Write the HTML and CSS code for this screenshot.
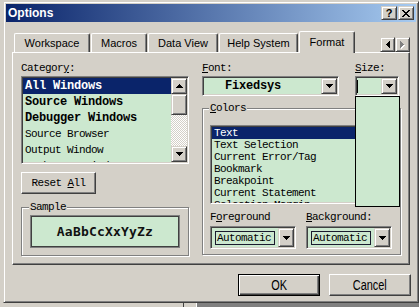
FILE: index.html
```html
<!DOCTYPE html>
<html lang="en">
<head>
  <meta charset="UTF-8">
  <meta name="viewport" content="width=device-width, initial-scale=1.0">
  <title>Options</title>
  <link rel="stylesheet" href="styles.css">
</head>
<body>
  <div class="dialog raised">
    <div class="titlebar">
      <span class="title">Options</span>
      <div class="title-buttons">
        <div class="title-btn raised help">?</div>
        <div class="title-btn raised">
          <svg width="8" height="7" shape-rendering="crispEdges"><path d="M0 0h2v1H0zM6 0h2v1H6zM1 1h2v1H1zM5 1h2v1H5zM2 2h4v1H2zM3 3h2v1H3zM2 4h4v1H2zM1 5h2v1H1zM5 5h2v1H5zM0 6h2v1H0zM6 6h2v1H6z"/></svg>
        </div>
      </div>
    </div>

    <div class="tabs">
      <div class="tab tab-workspace">Workspace</div>
      <div class="tab tab-macros">Macros</div>
      <div class="tab tab-dataview">Data View</div>
      <div class="tab tab-help">Help System</div>
      <div class="tab tab-format active">Format</div>
      <div class="tab-scroll">
        <div class="scroll-btn raised">
          <svg width="4" height="7" shape-rendering="crispEdges"><path d="M3 0h1v7H3zM2 1h1v5H2zM1 2h1v3H1zM0 3h1v1H0z"/></svg>
        </div>
        <div class="scroll-btn raised">
          <svg width="5" height="8" shape-rendering="crispEdges">
            <path fill="#fff" d="M1 1h1v7H1zM2 2h1v5H2zM3 3h1v3H3zM4 4h1v1H4z"/>
            <path fill="#808080" d="M0 0h1v7H0zM1 1h1v5H1zM2 2h1v3H2zM3 3h1v1H3z"/>
          </svg>
        </div>
      </div>
    </div>

    <div class="panel">
      <div class="col-left">
        <div class="label">Categor<u>y</u>:</div>
        <div class="listbox sunken category-list">
          <div class="rows">
            <div class="row bold selected">All Windows</div>
            <div class="row bold">Source Windows</div>
            <div class="row bold">Debugger Windows</div>
            <div class="row">Source Browser</div>
            <div class="row">Output Window</div>
            <div class="row">Workspace Window</div>
          </div>
          <div class="vscroll">
            <div class="sb-btn raised">
              <svg width="7" height="4" shape-rendering="crispEdges"><path d="M3 0h1v1H3zM2 1h3v1H2zM1 2h5v1H1zM0 3h7v1H0z"/></svg>
            </div>
            <div class="sb-thumb raised"></div>
            <div class="sb-track"></div>
            <div class="sb-btn raised">
              <svg width="7" height="4" shape-rendering="crispEdges"><path d="M0 0h7v1H0zM1 1h5v1H1zM2 2h3v1H2zM3 3h1v1H3z"/></svg>
            </div>
          </div>
        </div>
        <div class="push reset"><span>Reset <u>A</u>ll</span></div>
        <fieldset class="group sample-group">
          <legend>Sample</legend>
          <div class="sample">AaBbCcXxYyZz</div>
        </fieldset>
      </div>

      <div class="col-right">
        <div class="font-row">
          <div class="font-col">
            <div class="label"><u>F</u>ont:</div>
            <div class="combo sunken">
              <div class="combo-field"><span class="font-name">Fixedsys</span></div>
              <div class="drop-btn raised">
                <svg width="7" height="4" shape-rendering="crispEdges"><path d="M0 0h7v1H0zM1 1h5v1H1zM2 2h3v1H2zM3 3h1v1H3z"/></svg>
              </div>
            </div>
          </div>
          <div class="size-col">
            <div class="label"><u>S</u>ize:</div>
            <div class="combo sunken">
              <div class="combo-field"><span class="caret"></span></div>
              <div class="drop-btn raised">
                <svg width="7" height="4" shape-rendering="crispEdges"><path d="M0 0h7v1H0zM1 1h5v1H1zM2 2h3v1H2zM3 3h1v1H3z"/></svg>
              </div>
            </div>
            <div class="size-list"></div>
          </div>
        </div>

        <fieldset class="group colors-group">
          <legend><u>C</u>olors</legend>
          <div class="listbox sunken colors-list">
            <div class="row selected">Text</div>
            <div class="row">Text Selection</div>
            <div class="row">Current Error/Tag</div>
            <div class="row">Bookmark</div>
            <div class="row">Breakpoint</div>
            <div class="row">Current Statement</div>
            <div class="row">Selection Margin</div>
          </div>
          <div class="pickers">
            <div class="picker">
              <div class="label">F<u>o</u>reground</div>
              <div class="combo sunken color-combo">
                <div class="combo-field"><span class="color-value">Automatic</span></div>
                <div class="drop-btn raised">
                  <svg width="7" height="4" shape-rendering="crispEdges"><path d="M0 0h7v1H0zM1 1h5v1H1zM2 2h3v1H2zM3 3h1v1H3z"/></svg>
                </div>
              </div>
            </div>
            <div class="picker">
              <div class="label"><u>B</u>ackground:</div>
              <div class="combo sunken color-combo">
                <div class="combo-field"><span class="color-value">Automatic</span></div>
                <div class="drop-btn raised">
                  <svg width="7" height="4" shape-rendering="crispEdges"><path d="M0 0h7v1H0zM1 1h5v1H1zM2 2h3v1H2zM3 3h1v1H3z"/></svg>
                </div>
              </div>
            </div>
          </div>
        </fieldset>
      </div>
    </div>

    <div class="actions">
      <div class="push default"><span class="push-text">OK</span></div>
      <div class="push"><span class="push-text">Cancel</span></div>
    </div>
  </div>
  <div class="backdrop-strip"></div>
</body>
</html>
```

FILE: styles.css
```css
* {
  box-sizing: border-box;
}
body {
  margin: 0;
  width: 419px;
  height: 307px;
  overflow: hidden;
  background: #d4d0c8;
  font-family: "Liberation Mono", "DejaVu Sans Mono", monospace;
  font-size: 11px;
  letter-spacing: -0.6px;
  color: #000;
}

/* win2k bevels */
.raised {
  border: 1px solid;
  border-color: #d4d0c8 #404040 #404040 #d4d0c8;
  box-shadow: inset 1px 1px #fff, inset -1px -1px #808080;
  background: #d4d0c8;
}
.sunken {
  border: 1px solid;
  border-color: #808080 #fff #fff #808080;
  box-shadow: inset 1px 1px #404040, inset -1px -1px #d4d0c8;
}

.dialog {
  width: 416px;
  height: 302px;
  margin: 1px 0 0 3px;
  padding: 2px;
  display: flex;
  flex-direction: column;
}

.titlebar {
  flex: none;
  height: 18px;
  padding: 0 2px;
  display: flex;
  align-items: center;
  justify-content: space-between;
  background: linear-gradient(to right, #0a246a, #a6caf0);
}
.title {
  font-family: "Liberation Sans", Arial, sans-serif;
  font-size: 12px;
  font-weight: bold;
  letter-spacing: 0;
  color: #fff;
}
.title-buttons {
  display: flex;
  gap: 1px;
}
.title-btn {
  width: 16px;
  height: 14px;
  display: flex;
  align-items: center;
  justify-content: center;
}
.title-btn.help {
  font-family: "Liberation Sans", Arial, sans-serif;
  font-size: 11px;
  font-weight: bold;
  letter-spacing: 0;
  line-height: 1;
}

.tabs {
  flex: none;
  height: 21px;
  margin: 9px 6px 0 6px;
  padding-left: 2px;
  display: flex;
  align-items: flex-end;
  gap: 1px;
}
.tab {
  height: 19px;
  border: 1px solid;
  border-color: #fff #404040 transparent #fff;
  border-bottom: 0;
  border-radius: 2px 2px 0 0;
  box-shadow: inset -1px 0 #808080;
  display: flex;
  align-items: center;
  justify-content: center;
  font-family: "Liberation Sans", Arial, sans-serif;
  font-size: 11px;
  letter-spacing: 0;
}
.tab-workspace { width: 76px; }
.tab-macros { width: 56px; }
.tab-dataview { width: 70px; }
.tab-help { width: 79px; }
.tab-format { width: 56px; }
.tab.active {
  height: 22px;
  margin-bottom: -1px;
  padding-bottom: 2px;
  position: relative;
  z-index: 1;
  background: #d4d0c8;
}
.tab-scroll {
  margin-left: auto;
  display: flex;
}
.scroll-btn {
  width: 15px;
  height: 15px;
  display: flex;
  align-items: center;
  justify-content: center;
}

.panel {
  flex: none;
  height: 213px;
  margin: 0 6px;
  padding: 9px 8px 0 8px;
  display: flex;
  gap: 13px;
  border: 1px solid;
  border-color: #fff #404040 #404040 #fff;
  box-shadow: inset -1px -1px #808080;
}
.col-left {
  width: 168px;
  display: flex;
  flex-direction: column;
}
.col-right {
  width: 199px;
  display: flex;
  flex-direction: column;
}
.label {
  height: 13px;
  line-height: 13px;
  margin-bottom: 1px;
  white-space: nowrap;
}

.listbox {
  padding: 1px;
  background: #cce8cf;
  overflow: hidden;
}
.row {
  padding-left: 2px;
  white-space: nowrap;
  overflow: hidden;
}
.row.selected {
  background: #0a246a;
  color: #fff;
}
.row.bold {
  font-size: 12px;
  font-weight: bold;
  letter-spacing: -0.2px;
}
.category-list {
  height: 88px;
  display: flex;
}
.category-list .rows {
  flex: 1;
  overflow: hidden;
}
.category-list .row {
  height: 16px;
  line-height: 16px;
}
.vscroll {
  width: 16px;
  display: flex;
  flex-direction: column;
}
.sb-btn {
  height: 16px;
  display: flex;
  align-items: center;
  justify-content: center;
}
.sb-thumb {
  height: 21px;
}
.sb-track {
  flex: 1;
  background: repeating-conic-gradient(#fff 0 25%, #d4d0c8 0 50%) 0 0 / 2px 2px;
}

.push {
  height: 22px;
  display: flex;
  align-items: center;
  justify-content: center;
  border: 1px solid;
  border-color: #fff #404040 #404040 #fff;
  box-shadow: inset -1px -1px #808080;
  background: #d4d0c8;
  white-space: pre;
}
.reset {
  width: 75px;
  margin-top: 8px;
}

.group {
  margin: 0;
  min-width: 0;
  border: 1px solid #808080;
  box-shadow: inset 1px 1px #fff, 1px 1px #fff;
}
.group legend {
  margin-left: -1px;
  padding: 0 1px;
  line-height: 12px;
  background: #d4d0c8;
}
.sample-group {
  margin-top: 7px;
  padding: 2px 8px 7px 8px;
}
.sample {
  height: 33px;
  border: 1px solid #808080;
  box-shadow: inset 0 0 0 1px #404040;
  background: #cce8cf;
  display: flex;
  align-items: center;
  justify-content: center;
  font-family: "DejaVu Sans Mono", monospace;
  font-size: 13px;
  font-weight: bold;
  letter-spacing: 0.2px;
  color: #111;
}

.font-row {
  display: flex;
  gap: 16px;
}
.font-col {
  width: 137px;
}
.size-col {
  width: 44px;
  position: relative;
}
.combo {
  height: 20px;
  padding: 1px;
  display: flex;
  background: #cce8cf;
}
.combo-field {
  flex: 1;
  display: flex;
  align-items: center;
}
.drop-btn {
  width: 16px;
  display: flex;
  align-items: center;
  justify-content: center;
}
.font-name {
  padding-left: 21px;
  font-size: 12px;
  font-weight: bold;
  letter-spacing: -0.2px;
}
.caret {
  width: 1px;
  height: 13px;
  background: #000;
}
.size-list {
  position: absolute;
  left: 0;
  top: 34px;
  width: 45px;
  height: 111px;
  border: 1px solid #000;
  background: #cce8cf;
  z-index: 2;
}

.colors-group {
  margin-top: 6px;
  padding: 11px 8px 5px 7px;
}
.colors-list {
  height: 79px;
}
.colors-list .row {
  height: 12px;
  line-height: 12px;
}
.pickers {
  margin-top: 7px;
  display: flex;
  gap: 10px;
}
.picker {
  width: 86px;
}
.picker .label {
  height: 12px;
  line-height: 12px;
  margin-bottom: 3px;
}
.color-combo {
  height: 23px;
}
.color-combo .combo-field {
  padding: 0 2px 0 3px;
}
.color-value {
  width: 60px;
  height: 14px;
  line-height: 12px;
  padding-left: 1px;
  border: 1px solid #1a1a2e;
}

.actions {
  flex: none;
  margin: 9px 5px 0 0;
  display: flex;
  justify-content: flex-end;
  gap: 9px;
}
.actions .push {
  width: 82px;
}
.push.default {
  border-color: #000;
  box-shadow: inset 1px 1px #fff, inset -1px -1px #404040, inset -2px -2px #808080;
}
.push-text {
  display: inline-block;
  font-family: "Liberation Sans", Arial, sans-serif;
  font-size: 14px;
  letter-spacing: 0;
  transform: scaleX(0.78);
}

.backdrop-strip {
  height: 4px;
  background: linear-gradient(to right, #d4d0c8 183px, #404040 183px 184px, #d4d0c8 184px 196px, #fff 196px 197px, #808080 197px);
}
```
